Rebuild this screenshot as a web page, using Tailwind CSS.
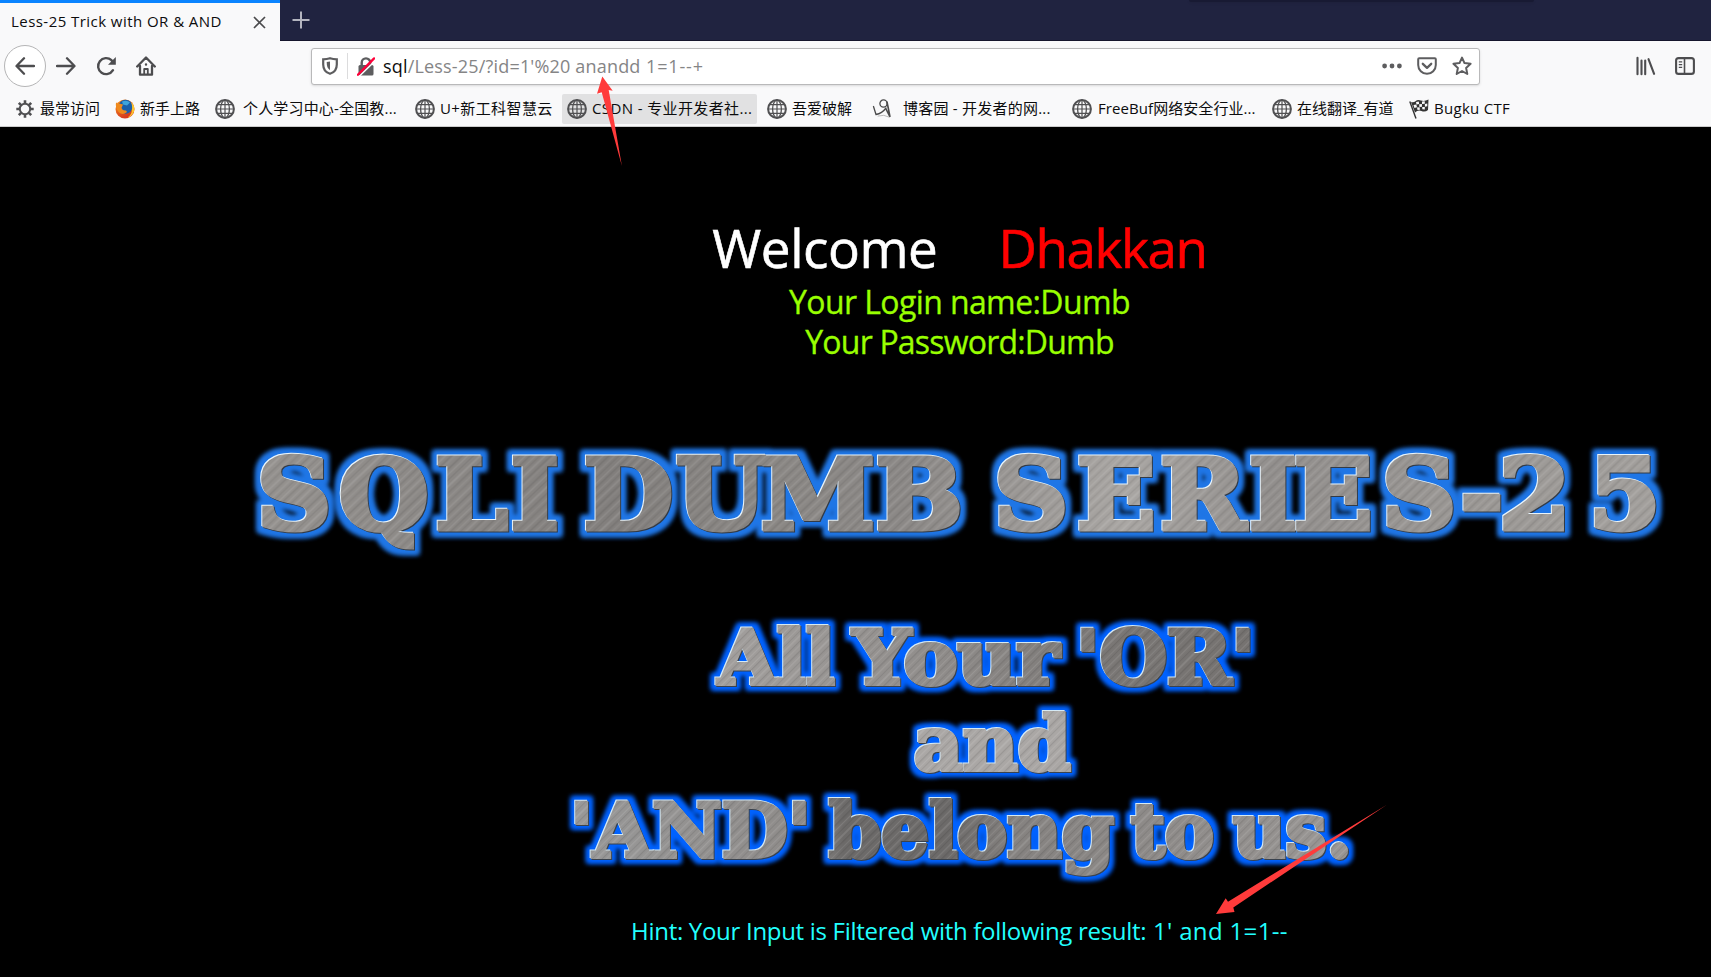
<!DOCTYPE html>
<html lang="zh-CN">
<head>
<meta charset="utf-8">
<title>Less-25 Trick with OR &amp; AND</title>
<script src="https://cdn.jsdelivr.net/npm/@tailwindcss/browser@4"></script>
</head>
<body class="w-[1711px] h-[977px] overflow-hidden bg-black relative font-['Open_Sans','Noto_Sans_CJK_SC',sans-serif] text-[#0c0c0d]">
<svg class="hidden">
  <symbol id="globe" viewBox="0 0 20 20"><g fill="none" stroke="#505052"><circle cx="10" cy="10" r="8.9" stroke-width="2"/><ellipse cx="10" cy="10" rx="4.4" ry="8.8" stroke-width="1.3"/><path d="M10 1v18M1 10h18M2.5 5.6h15M2.5 14.4h15" stroke-width="1.2"/></g></symbol>
</svg>
<div class="flex h-[41px] bg-[#202340] border-b border-[#15152c]">
  <div class="w-[280px] h-[41px] bg-[#f9f9fa] border-t-[3px] border-[#0a84ff] flex items-center pl-[11px] pr-[14px] pb-[3px] justify-between">
    <span class="text-[15px] leading-5 whitespace-nowrap tracking-[0.45px]">Less-25 Trick with OR &amp; AND</span>
    <svg class="w-[13px] h-[13px] mt-[3px]" viewBox="0 0 13 13"><path d="M1 1l11 11M12 1L1 12" stroke="#4a4a4c" stroke-width="1.7"/></svg>
  </div>
  <svg class="w-[18px] h-[18px] ml-[12px] mt-[11px]" viewBox="0 0 18 18"><path d="M9 0.5v17M.5 9h17" stroke="#b4b5c0" stroke-width="2"/></svg>
  <div class="w-[345px] h-[2px] ml-[879px] bg-[#181a33] rounded-b-sm shadow-sm"></div>
</div>
<div class="flex items-center h-[50px] bg-[#f9f9fa] pl-[4px] pr-[16px]">
  <div class="w-[42px] h-[42px] rounded-full border border-[#b5b5b6] bg-white flex items-center justify-center">
    <svg class="w-5 h-5" viewBox="0 0 20 20" fill="none" stroke="#4d4d4f" stroke-width="2.3" stroke-linecap="round" stroke-linejoin="round"><path d="M19 10H1.8M9 2.3L1.5 10 9 17.7"/></svg>
  </div>
  <svg class="w-5 h-5 ml-[10px]" viewBox="0 0 20 20" fill="none" stroke="#4d4d4f" stroke-width="2.3" stroke-linecap="round" stroke-linejoin="round"><path d="M1 10h17.2M11 2.3l7.5 7.7-7.5 7.7"/></svg>
  <svg class="w-5 h-5 ml-[20px]" viewBox="0 0 20 20" fill="none" stroke="#4d4d4f" stroke-width="2.4"><path d="M17 14.2A8 8 0 1 1 15.500 4.200l1.500 2" stroke-linecap="round"/><path d="M19.800 1v7.800h-7.800z" fill="#4d4d4f" stroke="none"/></svg>
  <svg class="w-5 h-5 ml-[20px]" viewBox="0 0 20 20" fill="none" stroke="#4d4d4f" stroke-width="2.3" stroke-linecap="round" stroke-linejoin="round"><path d="M1.2 10.5L10 1.5l8.800 9M4 10v8.700h12V10"/><path d="M8.200 18v-5h3.600v5" stroke-width="1.800"/><path d="M10 8.300v.4" /></svg>
  <div class="w-[1169px] h-[37px] ml-[155px] bg-white border border-[#b9b9ba] rounded-[3px] shadow-sm flex items-center pl-[10px] pr-[7px]">
    <svg class="w-4 h-[18px]" viewBox="0 0 16 18"><path d="M8 1.200C5.700 2 3.400 2.300 1.200 2.300V7.500c0 4.500 2.500 8 6.800 9.300 4.300-1.300 6.800-4.800 6.800-9.300V2.300C12.600 2.300 10.300 2 8 1.200z" fill="none" stroke="#5d5d5f" stroke-width="2.200"/><path d="M8 4.600v8.600C5.600 11.800 4.700 9.500 4.700 5.100z" fill="#5d5d5f"/></svg>
    <div class="w-px h-[26px] bg-[#dcdcdd] ml-[9px]"></div>
    <svg class="w-[18px] h-[19px] ml-[9px]" viewBox="0 0 18 19"><path d="M4.700 9V5.700a4.300 4.300 0 0 1 8.600 0V9" fill="none" stroke="#5d5d5f" stroke-width="2.400"/><rect x="1.500" y="8" width="15" height="10.500" rx="1.500" fill="#5d5d5f"/><path d="M2 19.500L19 3" stroke="#fff" stroke-width="1.500"/><path d="M.9 17.800L17.100 1.400" stroke="#ff0039" stroke-width="2.300" stroke-linecap="round"/></svg>
    <div class="text-[18px] leading-6 ml-[8px] text-[#858586] whitespace-pre tracking-[0.18px]"><span class="text-[#0c0c0d]">sql</span>/Less-25/?id=1'%20 anandd<span class="tracking-[0.85px]"> 1=1--+</span></div>
    <svg class="w-5 h-5 ml-auto" viewBox="0 0 20 20" fill="#5d5d5f"><circle cx="2.600" cy="10" r="2.400"/><circle cx="10" cy="10" r="2.400"/><circle cx="17.400" cy="10" r="2.400"/></svg>
    <svg class="w-5 h-[18px] ml-[15px]" viewBox="0 0 20 18" fill="none" stroke="#5d5d5f" stroke-linecap="round" stroke-linejoin="round"><path d="M2.200 1.200h15.600q1 0 1 1V8a8.800 8.800 0 0 1-17.600 0V2.200q0-1 1-1z" stroke-width="2"/><path d="M5.800 6.800L10 10.800l4.200-4" stroke-width="2.300"/></svg>
    <svg class="w-5 h-5 ml-[15px]" viewBox="0 0 20 20" fill="none" stroke="#5d5d5f" stroke-width="2" stroke-linejoin="round"><path d="M10 1.600l2.500 5.500 6.100.7-4.500 4.100 1.200 6.100L10 15l-5.300 3 1.200-6.100L1.400 7.800l6.100-.7z"/></svg>
  </div>
  <svg class="w-5 h-5 ml-auto" viewBox="0 0 20 20" stroke="#4d4d4f" stroke-width="2.100" stroke-linecap="round"><path d="M1.500 1.800v16.400M5.500 4.500v13.700M9.200 4.500v13.700M12.500 3.200l5.600 14.600"/></svg>
  <svg class="w-5 h-[18px] ml-[19px]" viewBox="0 0 20 18" fill="none" stroke="#4d4d4f"><rect x="1.100" y="1.100" width="17.800" height="15.800" rx="2.500" stroke-width="2.100"/><path d="M9.500 1.500v15" stroke-width="1.600"/><path d="M3.800 4.800h3.400M3.800 7.600h3.400M3.800 10.400h3.400" stroke-width="1.300"/></svg>
</div>
<div class="flex items-center h-[36px] bg-[#f9f9fa] border-b border-[#ccc] text-[15px] leading-5 whitespace-nowrap pl-[16px]">
  <svg class="w-[18px] h-[18px] mr-[6px]" viewBox="0 0 18 18" fill="none" stroke="#505052"><circle cx="9" cy="9" r="5.200" stroke-width="2"/><path d="M9 .3v3M9 14.700v3M.3 9h3M14.700 9h3M2.800 2.800l2.300 2.300M12.900 12.900l2.300 2.300M15.200 2.800l-2.300 2.300M5.100 12.900l-2.300 2.300" stroke-width="2.600"/></svg>
  <span class="w-[75px] pb-[2px]">最常访问</span>
  <svg class="w-5 h-5 mr-[5px]" viewBox="0 0 20 20"><defs><linearGradient id="fx" x1="0" y1="0" x2=".6" y2="1"><stop offset="0" stop-color="#f7941d"/><stop offset="1" stop-color="#d4321f"/></linearGradient></defs><circle cx="10" cy="10" r="9.500" fill="url(#fx)"/><circle cx="10.500" cy="7.800" r="7" fill="#1b5faa"/><path d="M7 2.500q5-2 8 1l-3 3-4-1z" fill="#3fa4dc"/><path d="M1 3.500q1.500 1 3 1l4 1-1.500 3.500q1 3 4.500 2.500l1 1.500q-4 3.500-8 .5Q0 9 1 3.500z" fill="#f08a1d"/><path d="M16 3q4.500 4 3 9.500-2 5-7 6.500 5-3 5-9 .5-4-1-7z" fill="#fcc62d"/></svg>
  <span class="w-[75px] pb-[2px]">新手上路</span>
  <svg class="w-5 h-5 mr-[8px]"><use href="#globe"/></svg>
  <span class="w-[172px] pb-[2px] tracking-[0.17px]">个人学习中心-全国教...</span>
  <svg class="w-5 h-5 mr-[5px]"><use href="#globe"/></svg>
  <span class="w-[122px] pb-[2px] tracking-[0.4px]">U+新工科智慧云</span>
  <div class="flex items-center h-[30px] w-[195px] bg-[#e1e1e2] rounded-[2px] pl-[5px] mr-[10px]">
    <svg class="w-5 h-5 mr-[5px]"><use href="#globe"/></svg><span class="pb-[2px] tracking-[0.38px]">CSDN - 专业开发者社...</span>
  </div>
  <svg class="w-5 h-5 mr-[5px]"><use href="#globe"/></svg>
  <span class="w-[80px] pb-[2px]">吾爱破解</span>
  <svg class="w-5 h-5 mr-[11px]" viewBox="0 0 20 20" fill="none" stroke="#4a4a4a" stroke-linecap="round"><circle cx="11.500" cy="4.500" r="3.600" stroke-width="1.300"/><path d="M15 3q1.500 7 3 15L14 10" stroke-width="1.600"/><path d="M1.500 7.500l2.500 8q6-1 10-6.500" stroke-width="1.300"/><path d="M6 17q6-2 11 1" stroke="#aaa" stroke-width=".8"/></svg>
  <span class="w-[169px] pb-[2px] tracking-[0.23px]">博客园 - 开发者的网...</span>
  <svg class="w-5 h-5 mr-[6px]"><use href="#globe"/></svg>
  <span class="w-[174px] pb-[2px] tracking-[0.07px]">FreeBuf网络安全行业...</span>
  <svg class="w-5 h-5 mr-[5px]"><use href="#globe"/></svg>
  <span class="w-[112px] pb-[2px]">在线翻译_有道</span>
  <svg class="w-5 h-5 mr-[5px]" viewBox="0 0 20 20"><path d="M.8 2.500L7 19.500" stroke="#333" stroke-width="1.400"/><path d="M2 3q2.500 1 4.500-.8T12 1.500t7.500-1L19 11q-3 2.500-6.500 1T6 13.500z" fill="#333"/><path d="M7 3l2.800-.5.3 2.500-2.600.5zM13 2.500l2.800-.3v2.600l-2.800.2zM4.500 6l2.800-.5.7 2.800-2.600.8zM10.200 5.300l2.700-.3.100 2.800-2.600.2zM15.900 5l2.400-.5v2.700l-2.400.5zM8 8.500l2.600-.3.300 2.600-2.400.3zM13.200 8l2.600-.1v2.600l-2.500-.2z" fill="#f9f9fa"/></svg>
  <span class="pb-[2px] tracking-[0.3px]">Bugku CTF</span>
</div>
<main class="h-[850px] pl-[208px] pt-[79px] text-center">
  <div class="flex justify-center items-baseline text-[53px] leading-[84px] h-[76px] gap-[61px] text-white whitespace-nowrap [-webkit-text-stroke:0.6px_currentColor]"><span class="tracking-[-0.45px]">Welcome</span><span class="text-[#f00] tracking-[-1.4px]">Dhakkan</span></div>
  <div class="text-[32px] leading-[40px] text-[#9f0] [-webkit-text-stroke:0.3px_currentColor]"><span class="tracking-[-0.6px]">Your Login name:Dumb</span><br><span class="tracking-[-0.8px]">Your Password:Dumb</span></div>
  <svg class="block w-[1503px] h-[530px] mt-[8px]" viewBox="208 370 1503 530" font-family="'DejaVu Serif',serif" font-weight="700">
    <defs>
      <pattern id="st" width="67" height="400" patternUnits="userSpaceOnUse" patternTransform="rotate(45)">
        <path d="M1 0h1v400H1zM8 0h.8v400H8zM14 0h1.400v400h-1.400zM21 0h.6v400h-.6zM29 0h1.200v400h-1.200zM37 0h2v400h-2zM46 0h.7v400h-.7zM53 0h1.300v400h-1.300zM61 0h.8v400h-.8z" fill="#fff" fill-opacity=".11"/>
        <path d="M4 0h1.200v400H4zM11 0h.7v400h-.7zM18 0h1.200v400h-1.200zM25 0h1.500v400h-1.500zM33 0h.8v400h-.8zM42 0h1.200v400h-1.200zM49 0h.8v400h-.8zM57 0h1.400v400h-1.400zM64 0h.8v400h-.8z" fill-opacity=".1"/>
      </pattern>
      <linearGradient id="g1"><stop offset="0" stop-color="#969390"/><stop offset=".25" stop-color="#827f7d"/><stop offset=".35" stop-color="#8a8784"/><stop offset=".45" stop-color="#8b8886"/><stop offset=".6" stop-color="#a9a6a3"/><stop offset=".7" stop-color="#928f8d"/><stop offset=".85" stop-color="#9b9895"/><stop offset="1" stop-color="#a5a29f"/></linearGradient>
      <linearGradient id="g2"><stop offset="0" stop-color="#999"/><stop offset=".31" stop-color="#8e8b89"/><stop offset=".35" stop-color="#6c6a69"/><stop offset=".48" stop-color="#6c6a69"/><stop offset=".56" stop-color="#858280"/><stop offset="1" stop-color="#9b9896"/></linearGradient>
      <linearGradient id="g3"><stop offset="0" stop-color="#a3a09e"/><stop offset=".4" stop-color="#908d8b"/><stop offset=".7" stop-color="#7a7775"/><stop offset="1" stop-color="#757270"/></linearGradient>
      <pattern id="m1" x="230" y="440" width="1400" height="130" patternUnits="userSpaceOnUse"><rect width="1400" height="130" fill="url(#g1)"/><rect width="1400" height="130" fill="url(#st)"/></pattern>
      <pattern id="m2" x="560" y="780" width="810" height="120" patternUnits="userSpaceOnUse"><rect width="810" height="120" fill="url(#g2)"/><rect width="810" height="120" fill="url(#st)"/></pattern>
      <pattern id="m3" x="710" y="610" width="560" height="100" patternUnits="userSpaceOnUse"><rect width="560" height="100" fill="url(#g3)"/><rect width="560" height="100" fill="url(#st)"/></pattern>
      <pattern id="m4" x="900" y="700" width="180" height="80" patternUnits="userSpaceOnUse"><rect width="180" height="80" fill="#aaa7a5"/><rect width="180" height="80" fill="url(#st)"/></pattern>
      <filter id="f1" filterUnits="userSpaceOnUse" x="208" y="400" width="1503" height="190" color-interpolation-filters="sRGB">
        <feMorphology in="SourceAlpha" operator="dilate" radius="5"/><feGaussianBlur stdDeviation="2.800" result="b"/><feFlood flood-color="#1f76e6"/><feComposite in2="b" operator="in" result="glow"/>
        <feFlood flood-color="#e8f4fb"/><feComposite in2="SourceAlpha" operator="in"/><feOffset dx="-1.100" dy="-1.100" result="hi"/>
        <feFlood flood-color="#333b46"/><feComposite in2="SourceAlpha" operator="in"/><feOffset dx=".8" dy=".8" result="lo"/>
        <feMerge><feMergeNode in="glow"/><feMergeNode in="glow"/><feMergeNode in="lo"/><feMergeNode in="hi"/><feMergeNode in="SourceGraphic"/></feMerge>
      </filter>
      <filter id="f2" filterUnits="userSpaceOnUse" x="208" y="590" width="1503" height="310" color-interpolation-filters="sRGB">
        <feMorphology in="SourceAlpha" operator="dilate" radius="4"/><feGaussianBlur stdDeviation="2.500" result="b"/><feFlood flood-color="#0062ff"/><feComposite in2="b" operator="in" result="glow"/>
        <feFlood flood-color="#d5eaf5"/><feComposite in2="SourceAlpha" operator="in"/><feOffset dx="-1" dy="-1" result="hi"/>
        <feFlood flood-color="#39424e"/><feComposite in2="SourceAlpha" operator="in"/><feOffset dx=".8" dy=".8" result="lo"/>
        <feMerge><feMergeNode in="glow"/><feMergeNode in="glow"/><feMergeNode in="lo"/><feMergeNode in="hi"/><feMergeNode in="SourceGraphic"/></feMerge>
      </filter>
    </defs>
    <g filter="url(#f1)"><g transform="scale(1.05 1)" font-size="98" fill="url(#m1)" stroke="url(#m1)" stroke-width="5">
      <text y="529" x="244.800 322.900 414.800 486.500">SQLI</text>
      <text y="529" x="556 643.800 724.800 834">DUMB</text>
      <text y="529" x="946.700 1025.700 1105 1189.500 1232.400 1316.200 1391 1427.600 1513.300">SERIES-25</text>
    </g></g>
    <g filter="url(#f2)" font-size="75" stroke-width="4">
      <g fill="url(#m3)" stroke="url(#m3)"><text x="718" y="684" textLength="117" lengthAdjust="spacingAndGlyphs">All</text><text x="853" y="684" textLength="206" lengthAdjust="spacingAndGlyphs">Your</text><text x="1076" y="684" textLength="179" lengthAdjust="spacingAndGlyphs">'OR'</text></g>
      <text x="914" y="770" textLength="157" lengthAdjust="spacingAndGlyphs" fill="url(#m4)" stroke="url(#m4)">and</text>
      <g fill="url(#m2)" stroke="url(#m2)"><text x="570" y="857" textLength="241" lengthAdjust="spacingAndGlyphs">'AND'</text><text x="829" y="857" textLength="285" lengthAdjust="spacingAndGlyphs">belong</text><text x="1131" y="857" textLength="83" lengthAdjust="spacingAndGlyphs">to</text><text x="1233" y="857" textLength="119" lengthAdjust="spacingAndGlyphs">us.</text></g>
    </g>
  </svg>
  <div class="text-[24px] leading-8 text-[#2ff] mt-[15px] tracking-[-0.3px]">Hint: Your Input is Filtered with following result:<span class="tracking-[0.35px]"> 1' and 1=1--</span></div>
</main>
<svg class="absolute inset-0 w-full h-full pointer-events-none" viewBox="0 0 1711 977" fill="#ff3b3b"><path d="M602.300 76.500L612.700 90.700 608.700 90 621.900 166 601.700 92.300 597 93.700z"/><path d="M1216 914L1225.700 898.300 1228 901.700 1386.500 805 1233.300 907.500 1234.500 912z"/></svg>
</body>
</html>
